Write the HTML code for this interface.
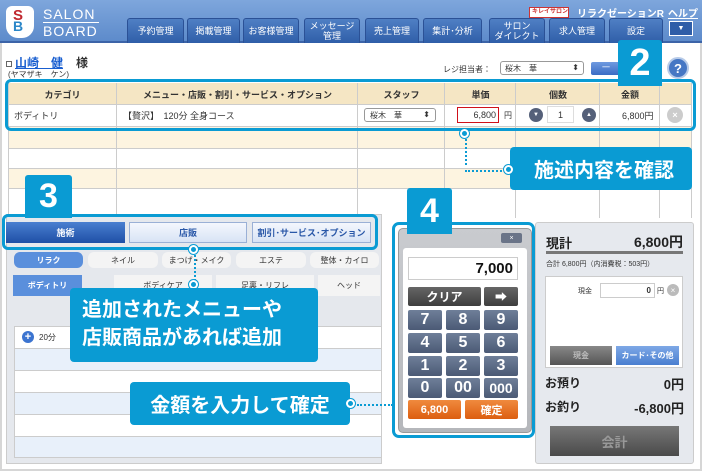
<!DOCTYPE html>
<html><head><meta charset="utf-8"><style>
*{margin:0;padding:0;box-sizing:border-box}
body{width:702px;height:471px;overflow:hidden;position:relative;background:#fff;font-family:"Liberation Sans","Noto Sans CJK JP",sans-serif;color:#333}
.a{position:absolute}
.hdr{left:0;top:0;width:702px;height:43px;background:linear-gradient(#7ea6dc,#5d8bcb);border-bottom:2px solid #3c64a8}
.tab{position:absolute;top:18px;height:25px;background:linear-gradient(#4f7fc4,#2f5ea8);border:1px solid #2b5196;border-bottom:none;border-radius:3px 3px 0 0;color:#fff;font-size:9px;text-align:center;line-height:10px;display:flex;align-items:center;justify-content:center}
.c{display:flex;align-items:center;justify-content:center}
.callout{position:absolute;background:#0a9bd3;color:#fff;font-weight:bold;border-radius:4px}
.num{position:absolute;background:#0a9bd3;color:#fff;font-weight:bold;font-size:34px;display:flex;align-items:center;justify-content:center;border-radius:3px 3px 0 0}
.cell{position:absolute;border-right:1px solid #ccc}
.kb{position:absolute;background:linear-gradient(#6f7f99,#4b5a75);border-radius:2px;color:#fff;font-weight:bold;font-size:16px;display:flex;align-items:center;justify-content:center}
.dot{position:absolute;width:9px;height:9px;border-radius:50%;background:#0a9bd3;border:2px solid #fff;box-shadow:0 0 0 1px #0a9bd3}
</style></head><body>
<div class="a" style="left:0;top:0;width:702px;height:471px;border:2px solid #d6d6d6"></div>
<div class="a hdr"></div>
<!-- logo -->
<div class="a" style="left:6px;top:6px;width:28px;height:32px;background:#fff;border-radius:6px 6px 12px 12px"></div>
<div class="a" style="left:13px;top:8px;font-size:15px;font-weight:bold;color:#c0282f;line-height:15px">S</div>
<div class="a" style="left:13px;top:19px;font-size:14px;font-weight:bold;color:#2a86c8;line-height:14px">B</div>
<div class="a" style="left:43px;top:7px;color:#fff;font-size:14px;letter-spacing:1px;line-height:15px">SALON</div>
<div class="a" style="left:43px;top:22px;width:56px;border-top:1px solid #fff"></div>
<div class="a" style="left:43px;top:24px;color:#fff;font-size:14px;letter-spacing:1px;line-height:15px">BOARD</div>
<div class="tab" style="left:127px;width:57px">予約管理</div>
<div class="tab" style="left:187px;width:53px">掲載管理</div>
<div class="tab" style="left:243px;width:56px">お客様管理</div>
<div class="tab" style="left:304px;width:56px">メッセージ<br>管理</div>
<div class="tab" style="left:365px;width:54px">売上管理</div>
<div class="tab" style="left:423px;width:59px">集計･分析</div>
<div class="tab" style="left:489px;width:56px">サロン<br>ダイレクト</div>
<div class="tab" style="left:549px;width:56px">求人管理</div>
<div class="tab" style="left:609px;width:54px">設定</div>
<div class="a c" style="left:669px;top:21px;width:24px;height:15px;background:#2f5ea8;border:1px solid #fff;color:#fff;font-size:7px">▼</div>
<div class="a" style="left:529px;top:7px;width:40px;height:11px;background:#fff;border:1px solid #c33;overflow:hidden"><div style="color:#c33;font-size:10px;font-weight:bold;white-space:nowrap;transform:scale(0.6);transform-origin:0 0;margin:1px 0 0 2px;line-height:10px">キレイサロン</div></div>
<div class="a" style="left:577px;top:5px;color:#fff;font-size:10px;font-weight:bold;white-space:nowrap">リラクゼーションR</div>
<div class="a" style="left:668px;top:5px;color:#fff;font-size:10px;font-weight:bold;text-decoration:underline">ヘルプ</div>
<!-- customer -->
<div class="a" style="left:6px;top:61px;width:6px;height:6px;border:1px solid #666"></div>
<div class="a" style="left:15px;top:54px;font-size:12px;font-weight:bold;color:#1a5fd0;text-decoration:underline">山崎　健</div>
<div class="a" style="left:76px;top:54px;font-size:12px;font-weight:bold">様</div>
<div class="a" style="left:8px;top:69px;font-size:8px">(ヤマザキ　ケン)</div>
<div class="a" style="left:443px;top:64px;font-size:8px">レジ担当者：</div>
<div class="a" style="left:500px;top:61px;width:84px;height:14px;border:1px solid #999;border-radius:3px;font-size:8px;padding:1px 4px">桜木　華<span style="float:right">⬍</span></div>
<div class="a" style="left:591px;top:62px;width:30px;height:13px;background:linear-gradient(#6f9ae0,#3b6cc4);border-radius:2px;color:#fff;font-size:8px;text-align:center">一</div>
<div class="a c" style="left:667px;top:57px;width:22px;height:22px;border-radius:50%;background:#4677c4;border:2px solid #b8cbe8;color:#fff;font-weight:bold;font-size:13px">?</div>
<!-- table -->
<div class="a" style="left:8px;top:83px;width:684px;height:21px;background:#f5e6c4"></div>
<div class="a" style="left:8px;top:104px;width:684px;height:22px;background:#fff;border-top:1px solid #ccc"></div>
<div class="a" style="left:8px;top:126px;width:684px;height:22px;background:#fdf4e0;border-top:1px solid #ccc"></div>
<div class="a" style="left:8px;top:148px;width:684px;height:20px;background:#fff;border-top:1px solid #ccc"></div>
<div class="a" style="left:8px;top:168px;width:684px;height:20px;background:#fdf4e0;border-top:1px solid #ccc"></div>
<div class="a" style="left:8px;top:188px;width:684px;height:28px;background:#fff;border-top:1px solid #ccc"></div>
<div class="cell" style="left:8px;top:83px;width:109px;height:135px;border-left:1px solid #ccc"></div>
<div class="cell" style="left:117px;top:83px;width:241px;height:135px"></div>
<div class="cell" style="left:358px;top:83px;width:87px;height:135px"></div>
<div class="cell" style="left:445px;top:83px;width:71px;height:135px"></div>
<div class="cell" style="left:516px;top:83px;width:84px;height:135px"></div>
<div class="cell" style="left:600px;top:83px;width:60px;height:135px"></div>
<div class="cell" style="left:660px;top:83px;width:32px;height:135px"></div>
<div class="a" style="top:88px;left:8px;width:109px;text-align:center;font-size:9px;font-weight:bold">カテゴリ</div>
<div class="a" style="top:88px;left:117px;width:241px;text-align:center;font-size:9px;font-weight:bold">メニュー・店販・割引・サービス・オプション</div>
<div class="a" style="top:88px;left:358px;width:87px;text-align:center;font-size:9px;font-weight:bold">スタッフ</div>
<div class="a" style="top:88px;left:445px;width:71px;text-align:center;font-size:9px;font-weight:bold">単価</div>
<div class="a" style="top:88px;left:516px;width:84px;text-align:center;font-size:9px;font-weight:bold">個数</div>
<div class="a" style="top:88px;left:600px;width:60px;text-align:center;font-size:9px;font-weight:bold">金額</div>
<div class="a" style="top:109px;left:14px;font-size:9px">ボディトリ</div>
<div class="a" style="top:109px;left:123px;font-size:9px">【贅沢】　120分 全身コース</div>
<div class="a" style="left:364px;top:108px;width:72px;height:14px;border:1px solid #999;border-radius:3px;font-size:8px;padding:1px 5px">桜木　華<span style="float:right">⬍</span></div>
<div class="a" style="left:457px;top:107px;width:42px;height:16px;border:1.5px solid #d0111a;font-size:9px;text-align:right;padding:2px 2px">6,800</div>
<div class="a" style="left:504px;top:110px;font-size:8px">円</div>
<div class="a c" style="left:529px;top:108px;width:14px;height:14px;border-radius:50%;background:#556079;color:#fff;font-size:6px">▼</div>
<div class="a" style="left:547px;top:106px;width:27px;height:17px;border:1px solid #ddd;font-size:9px;text-align:center;padding-top:3px">1</div>
<div class="a c" style="left:582px;top:108px;width:14px;height:14px;border-radius:50%;background:#556079;color:#fff;font-size:6px">▲</div>
<div class="a" style="left:622px;top:109px;font-size:9px">6,800円</div>
<div class="a c" style="left:667px;top:107px;width:16px;height:16px;border-radius:50%;background:#ccc;color:#fff;font-size:9px;font-weight:bold">×</div>
<div class="a" style="left:5px;top:79px;width:691px;height:52px;border:3px solid #0a9bd3;border-radius:6px"></div>
<!-- callout 2 -->
<div class="num" style="left:618px;top:40px;width:44px;height:46px;font-size:38px">2</div>
<div class="a" style="left:465px;top:135px;height:30px;border-left:2px dotted #0a9bd3"></div>
<div class="a" style="left:465px;top:170px;width:44px;border-top:2px dotted #0a9bd3"></div>
<div class="dot" style="left:460px;top:129px"></div>
<div class="callout c" style="left:510px;top:147px;width:182px;height:43px;font-size:20px;padding-left:6px">施述内容を確認</div>
<div class="dot" style="left:504px;top:165px"></div>
<!-- lower left -->
<div class="a" style="left:6px;top:214px;width:376px;height:250px;background:#e5e8ed;border:1px solid #ccc"></div>
<div class="a c" style="left:6px;top:222px;width:119px;height:21px;background:linear-gradient(#4a7fd0,#1e4fa6);color:#fff;font-size:9px;font-weight:bold">施術</div>
<div class="a c" style="left:129px;top:222px;width:118px;height:21px;background:linear-gradient(#f4f7fd,#d8e3f5);border:1px solid #9ab0d6;color:#2a58a8;font-size:9px;font-weight:bold">店販</div>
<div class="a c" style="left:252px;top:222px;width:119px;height:21px;background:linear-gradient(#f4f7fd,#d8e3f5);border:1px solid #9ab0d6;color:#2a58a8;font-size:9px;font-weight:bold">割引･サービス･オプション</div>
<div class="a" style="left:2px;top:214px;width:376px;height:36px;border:3px solid #0a9bd3;border-radius:6px"></div>
<div class="a c" style="left:14px;top:252px;width:69px;height:16px;border-radius:6px;background:#5a8fdc;color:#fff;font-size:8px;font-weight:bold">リラク</div>
<div class="a c" style="left:88px;top:252px;width:70px;height:16px;border-radius:6px;background:#f4f4f4;font-size:8px">ネイル</div>
<div class="a c" style="left:162px;top:252px;width:69px;height:16px;border-radius:6px;background:#f4f4f4;font-size:8px">まつげ・メイク</div>
<div class="a c" style="left:236px;top:252px;width:70px;height:16px;border-radius:6px;background:#f4f4f4;font-size:8px">エステ</div>
<div class="a c" style="left:310px;top:252px;width:69px;height:16px;border-radius:6px;background:#f4f4f4;font-size:8px">整体・カイロ</div>
<div class="a c" style="left:13px;top:275px;width:69px;height:21px;background:#5a8fdc;color:#fff;font-size:8px;font-weight:bold">ボディトリ</div>
<div class="a c" style="left:114px;top:275px;width:98px;height:21px;background:#f4f4f4;font-size:8px">ボディケア</div>
<div class="a c" style="left:216px;top:275px;width:98px;height:21px;background:#f4f4f4;font-size:8px">足裏・リフレ</div>
<div class="a c" style="left:318px;top:275px;width:62px;height:21px;background:#f4f4f4;font-size:8px">ヘッド</div>
<div class="a" style="left:14px;top:326px;width:368px;height:132px;background:#fff;border:1px solid #ccc"></div>
<div class="a" style="left:15px;top:348px;width:366px;height:22px;background:#e8f0fa;border-top:1px solid #ccc"></div>
<div class="a" style="left:15px;top:370px;width:366px;height:22px;background:#fff;border-top:1px solid #ccc"></div>
<div class="a" style="left:15px;top:392px;width:366px;height:22px;background:#e8f0fa;border-top:1px solid #ccc"></div>
<div class="a" style="left:15px;top:414px;width:366px;height:22px;background:#fff;border-top:1px solid #ccc"></div>
<div class="a" style="left:15px;top:436px;width:366px;height:21px;background:#e8f0fa;border-top:1px solid #ccc"></div>
<div class="a c" style="left:22px;top:331px;width:12px;height:12px;border-radius:50%;background:#3b74d0;color:#fff;font-size:11px;font-weight:bold">+</div>
<div class="a" style="left:39px;top:332px;font-size:8px">20分</div>
<!-- callout 3 -->
<div class="num" style="left:25px;top:175px;width:47px;height:43px">3</div>
<div class="a" style="left:194px;top:255px;height:30px;border-left:2px dotted #0a9bd3"></div>
<div class="dot" style="left:189px;top:245px"></div>
<div class="dot" style="left:189px;top:280px"></div>
<div class="callout" style="left:70px;top:288px;width:248px;height:74px;font-size:20px;line-height:28px;padding:8px 0 0 12px">追加されたメニューや<br>店販商品があれば追加</div>
<!-- callout enter -->
<div class="callout c" style="left:130px;top:382px;width:220px;height:43px;font-size:20px">金額を入力して確定</div>
<div class="a" style="left:357px;top:404px;width:36px;border-top:2px dotted #0a9bd3"></div>
<div class="dot" style="left:346px;top:399px"></div>
<!-- calculator -->
<div class="a" style="left:398px;top:228px;width:134px;height:205px;background:linear-gradient(#c9cbcf,#b5b7bb);border:1px solid #999;border-radius:5px"></div>
<div class="a c" style="left:501px;top:233px;width:21px;height:10px;background:#6a7488;border-radius:2px;color:#fff;font-size:7px">×</div>
<div class="a" style="left:403px;top:248px;width:124px;height:180px;background:#fff;border-radius:3px"></div>
<div class="a" style="left:408px;top:257px;width:110px;height:23px;border:1px solid #ccc;font-size:15px;font-weight:bold;text-align:right;padding:2px 4px;color:#111">7,000</div>
<div class="kb" style="left:408px;top:287px;width:73px;height:19px;background:linear-gradient(#666,#3e3e3e);font-size:12px">クリア</div>
<div class="kb" style="left:484px;top:287px;width:34px;height:19px;background:linear-gradient(#666,#3e3e3e);font-size:12px">➡</div>
<div class="kb" style="left:408px;top:310px;width:34px;height:20px">7</div><div class="kb" style="left:446px;top:310px;width:34px;height:20px">8</div><div class="kb" style="left:484px;top:310px;width:34px;height:20px">9</div>
<div class="kb" style="left:408px;top:333px;width:34px;height:20px">4</div><div class="kb" style="left:446px;top:333px;width:34px;height:20px">5</div><div class="kb" style="left:484px;top:333px;width:34px;height:20px">6</div>
<div class="kb" style="left:408px;top:356px;width:34px;height:20px">1</div><div class="kb" style="left:446px;top:356px;width:34px;height:20px">2</div><div class="kb" style="left:484px;top:356px;width:34px;height:20px">3</div>
<div class="kb" style="left:408px;top:378px;width:34px;height:20px">0</div><div class="kb" style="left:446px;top:378px;width:34px;height:20px">00</div><div class="kb" style="left:484px;top:378px;width:34px;height:20px;font-size:14px">000</div>
<div class="kb" style="left:408px;top:400px;width:53px;height:19px;background:linear-gradient(#f08a3e,#dc5e10);font-size:11px">6,800</div>
<div class="kb" style="left:465px;top:400px;width:53px;height:19px;background:linear-gradient(#f08a3e,#dc5e10);font-size:11px">確定</div>
<div class="a" style="left:392px;top:222px;width:143px;height:216px;border:3px solid #0a9bd3;border-radius:7px"></div>
<div class="num" style="left:407px;top:188px;width:45px;height:46px">4</div>
<!-- right panel -->
<div class="a" style="left:535px;top:222px;width:159px;height:242px;background:#e6e9ee;border:1px solid #ccc;border-radius:3px"></div>
<div class="a" style="left:546px;top:233px;font-size:13px;font-weight:bold;color:#222">現計</div>
<div class="a" style="left:600px;top:232px;width:83px;text-align:right;font-size:14px;font-weight:bold;color:#222">6,800円</div>
<div class="a" style="left:546px;top:251px;width:137px;height:3px;background:#777"></div>
<div class="a" style="left:546px;top:259px;font-size:7px">合計 6,800円（内消費税：503円）</div>
<div class="a" style="left:545px;top:276px;width:138px;height:92px;background:#fff;border:1px solid #ccc"></div>
<div class="a" style="left:578px;top:286px;font-size:7px">現金</div>
<div class="a" style="left:600px;top:283px;width:55px;height:15px;border:1px solid #ccc;font-size:8px;font-weight:bold;text-align:right;padding:2px 3px">0</div>
<div class="a" style="left:657px;top:286px;font-size:7px">円</div>
<div class="a c" style="left:667px;top:284px;width:12px;height:12px;border-radius:50%;background:#bbb;color:#fff;font-size:8px">×</div>
<div class="a c" style="left:550px;top:346px;width:62px;height:19px;background:linear-gradient(#888,#555);color:#bbb;font-size:8px;font-weight:bold">現金</div>
<div class="a c" style="left:616px;top:346px;width:63px;height:19px;background:linear-gradient(#7ea8e6,#4a7fd0);color:#fff;font-size:8px;font-weight:bold">カード･その他</div>
<div class="a" style="left:545px;top:374px;font-size:12px;font-weight:bold;color:#222">お預り</div>
<div class="a" style="left:600px;top:374px;width:84px;text-align:right;font-size:13px;font-weight:bold;color:#222">0円</div>
<div class="a" style="left:545px;top:398px;font-size:12px;font-weight:bold;color:#222">お釣り</div>
<div class="a" style="left:600px;top:398px;width:84px;text-align:right;font-size:13px;font-weight:bold;color:#222">-6,800円</div>
<div class="a c" style="left:550px;top:426px;width:129px;height:30px;background:linear-gradient(#777,#4a4a4a);color:#999;font-size:13px;font-weight:bold">会計</div>
</body></html>
